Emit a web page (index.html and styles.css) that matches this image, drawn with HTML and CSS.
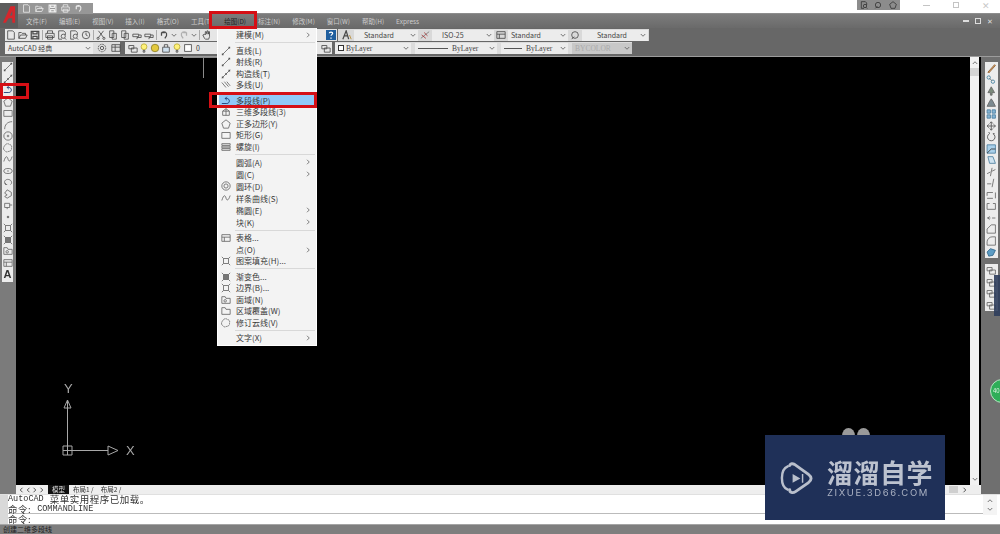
FILE: index.html
```html
<!DOCTYPE html>
<html lang="zh-CN">
<head>
  <meta charset="UTF-8" />
  <title>AutoCAD 经典</title>
  <link rel="stylesheet" href="styles.css">
</head>
<body>
<svg class="sprite" xmlns="http://www.w3.org/2000/svg">
  <symbol id="new" viewBox="0 0 12 12"><path d="M2 1h6l2 2v8H2z"/></symbol>
  <symbol id="open" viewBox="0 0 12 12"><path d="M1 10V3h3l1 1h4v2M1 10l2-4h8l-2 4z"/></symbol>
  <symbol id="save" viewBox="0 0 12 12"><path d="M1.500 1.500h9v9h-9zM3.500 1.500v3h5v-3M3.500 10.500v-3h5v3" stroke-width="1.500"/></symbol>
  <symbol id="print" viewBox="0 0 12 12"><path d="M3 4V1h6v3M1 4h10v5H1zM3 7h6v4H3z"/></symbol>
  <symbol id="preview" viewBox="0 0 12 12"><path d="M2 1h6l2 2v3M2 1v10h4"/><circle cx="7.500" cy="7.500" r="2.500"/><path d="M9 9.500l2 2"/></symbol>
  <symbol id="plot" viewBox="0 0 12 12"><circle cx="6" cy="6" r="4.500"/><path d="M6 3v3l2 1"/></symbol>
  <symbol id="cut" viewBox="0 0 12 12"><path d="M3 1l6 8M9 1l-6 8"/><circle cx="2.500" cy="10" r="1.300"/><circle cx="9.500" cy="10" r="1.300"/></symbol>
  <symbol id="copy" viewBox="0 0 12 12"><path d="M2 1h5v8H2zM5 4h5v7H5z"/></symbol>
  <symbol id="brush" viewBox="0 0 12 12"><path d="M1 5h7v3H1zM8 6h3v3H6v2"/></symbol>
  <symbol id="undo" viewBox="0 0 12 12"><path d="M3 3c4-2 7 0 6 4l-2 3M3 3v4M3 3h4" stroke-width="1.500"/></symbol>
  <symbol id="pan" viewBox="0 0 12 12"><path d="M3 10l-2-4 2-1 1 1V2l1 0 1 3V1l1 0 1 4V2l1 0v6l-1 3H4z"/></symbol>
  <symbol id="help" viewBox="0 0 12 12"><rect width="12" height="12" fill="#1f5e9e" stroke="none"/><path d="M4 4c0-2 4-2 4 0 0 1-2 2-2 3M6 9v1.500" stroke="#fff" stroke-width="1.500"/></symbol>
  <symbol id="gear" viewBox="0 0 12 12"><circle cx="6" cy="6" r="2"/><circle cx="6" cy="6" r="4.500" stroke-dasharray="2 1"/></symbol>
  <symbol id="grid" viewBox="0 0 12 12"><path d="M1 2h10v8H1zM1 5h10M5 2v8"/></symbol>
  <symbol id="layers" viewBox="0 0 12 12"><path d="M1 3h6v4H1zM4 6h7v5H4z"/></symbol>
  <symbol id="bulb" viewBox="0 0 12 12"><circle cx="6" cy="4.500" r="3.500" fill="#fff27a" stroke="#b9a93a"/><path d="M5 9h2v2H5z"/></symbol>
  <symbol id="sun" viewBox="0 0 12 12"><circle cx="6" cy="6" r="4.500" fill="#e3c93e" stroke="#8d7f25"/></symbol>
  <symbol id="lock" viewBox="0 0 12 12"><path d="M2 5h8v6H2z" fill="#cfe0ee"/><path d="M4 5V2h4v3"/></symbol>
  <symbol id="box" viewBox="0 0 12 12"><rect x="2" y="2" width="8" height="8" fill="#fff"/></symbol>
  <symbol id="textstyle" viewBox="0 0 12 12"><path d="M1 11L5 1l3 10M3 7h4" stroke-width="1.500"/><path d="M9 6l2 5" stroke="#b8892f"/></symbol>
  <symbol id="dim" viewBox="0 0 12 12"><path d="M1 10L11 2" stroke="#777"/><path d="M2 6l5 4M5 3l4 4" stroke="#a33"/></symbol>
  <symbol id="table" viewBox="0 0 12 12"><path d="M1 2h10v8H1zM1 5h10M4 5v5" /></symbol>
  <symbol id="mleader" viewBox="0 0 12 12"><circle cx="6" cy="6" r="4"/><path d="M2 11l3-3"/></symbol>
  <symbol id="line" viewBox="0 0 12 12"><path d="M2 10L10 2"/><path d="M1 9h2v2H1zM9 1h2v2H9z" fill="#555" stroke="none"/></symbol>
  <symbol id="xline" viewBox="0 0 12 12"><path d="M1 11L11 1"/><path d="M5 5h2v2H5zM1 9h2v2H1zM9 1h2v2H9z" fill="#555" stroke="none"/></symbol>
  <symbol id="mline" viewBox="0 0 12 12"><path d="M1 3l5 6M4 2l5 6M7 2l4 5"/></symbol>
  <symbol id="pline" viewBox="0 0 12 12"><path d="M1 9h6c4 0 4-6 0-6H5M5 3l2-2M5 3l2 2" stroke="#1d3f7a" stroke-width="1.100"/></symbol>
  <symbol id="pline3d" viewBox="0 0 12 12"><path d="M2 10V5l4-3 4 3v5zM2 5h8M6 2v8"/></symbol>
  <symbol id="polygon" viewBox="0 0 12 12"><path d="M6 1l5 4-2 6H3L1 5z"/></symbol>
  <symbol id="rect" viewBox="0 0 12 12"><path d="M1 3h10v7H1z"/></symbol>
  <symbol id="helix" viewBox="0 0 12 12"><path d="M1 2h10v2H1zM1 5h10v2H1zM1 8h10v2H1z"/></symbol>
  <symbol id="arc" viewBox="0 0 12 12"><path d="M2 11C2 6 5 2 11 2"/></symbol>
  <symbol id="circle" viewBox="0 0 12 12"><circle cx="6" cy="6" r="5"/><circle cx="6" cy="6" r="1"/></symbol>
  <symbol id="donut" viewBox="0 0 12 12"><circle cx="6" cy="6" r="5"/><circle cx="6" cy="6" r="2.500"/></symbol>
  <symbol id="spline" viewBox="0 0 12 12"><path d="M1 9c2-7 4-7 5-3s3 3 5-3"/></symbol>
  <symbol id="cloud" viewBox="0 0 12 12"><path d="M3 2c2-2 4-1 5 0 2 0 3 2 2 4 1 2-1 4-3 4-2 1-4 1-5-1-2-1-2-4 1-7z" stroke-dasharray="2 .6"/></symbol>
  <symbol id="ellipse" viewBox="0 0 12 12"><ellipse cx="6" cy="6" rx="5" ry="3"/><path d="M5 6h2"/></symbol>
  <symbol id="earc" viewBox="0 0 12 12"><path d="M3 9C0 6 3 2 7 3s4 5 2 6"/><path d="M5 9l-2 0v-2"/></symbol>
  <symbol id="insert" viewBox="0 0 12 12"><path d="M5 1l5 3v4l-5 3-3-2 3-2-3-2z"/></symbol>
  <symbol id="block" viewBox="0 0 12 12"><path d="M2 4h6v5H2zM8 6h3M5 9v2"/></symbol>
  <symbol id="point" viewBox="0 0 12 12"><circle cx="6" cy="6" r="1" fill="#444"/></symbol>
  <symbol id="hatch" viewBox="0 0 12 12"><path d="M3 3h6v6H3zM1 1l2 2M11 1L9 3M1 11l2-2M11 11L9 9"/></symbol>
  <symbol id="gradient" viewBox="0 0 12 12"><path d="M3 3h6v6H3z" fill="#777"/><path d="M1 1l2 2M11 1L9 3M1 11l2-2M11 11L9 9"/></symbol>
  <symbol id="region" viewBox="0 0 12 12"><path d="M1 2h4l1 2h5v6H1z" /><circle cx="5" cy="7" r="1.500"/></symbol>
  <symbol id="wipeout" viewBox="0 0 12 12"><path d="M1 2h4l1 2h5v6H1z"/></symbol>
  <symbol id="erase" viewBox="0 0 12 12"><path d="M2 11L10 2l1 1-8 9z" fill="#d9a56b" stroke="#8a5a2c"/></symbol>
  <symbol id="clone" viewBox="0 0 12 12"><circle cx="3" cy="3" r="2" stroke="#3f7f9f"/><circle cx="8" cy="8" r="2" stroke="#3f7f9f"/><path d="M4 4l3 3"/></symbol>
  <symbol id="mirror" viewBox="0 0 12 12"><path d="M6 1l4 7H7v3H5V8H2z" fill="#7b8b7b"/></symbol>
  <symbol id="offset" viewBox="0 0 12 12"><path d="M1 10l3-6 2-3 2 3 3 6z" fill="#7c8a90"/></symbol>
  <symbol id="array" viewBox="0 0 12 12"><path d="M1 1h4v4H1zM7 1h4v4H7zM1 7h4v4H1zM7 7h4v4H7z" fill="#86b6d6" stroke="#4a7d9e"/></symbol>
  <symbol id="move" viewBox="0 0 12 12"><path d="M6 1v10M1 6h10M6 1L4 3M6 1l2 2M6 11L4 9M6 11l2-2M1 6l2-2M1 6l2 2M11 6L9 4M11 6L9 8" stroke-width="1.200"/></symbol>
  <symbol id="rotate" viewBox="0 0 12 12"><path d="M4 2a4.500 4.500 0 1 0 4 0M4 2L3 0M8 2h2" stroke-width="1.200"/></symbol>
  <symbol id="scale" viewBox="0 0 12 12"><path d="M1 1h10v10H1z" fill="#a9d0ea" stroke="#4a7d9e"/><path d="M1 11l5-5h5" stroke="#333"/></symbol>
  <symbol id="stretch" viewBox="0 0 12 12"><path d="M2 2h6l3 8H4z" fill="#cfe3f0" stroke="#4a7d9e"/></symbol>
  <symbol id="trim" viewBox="0 0 12 12"><path d="M1 8l4-2M7 5l4-2M7 1L5 11"/></symbol>
  <symbol id="extend" viewBox="0 0 12 12"><path d="M1 7h5M9 1L7 11" /></symbol>
  <symbol id="brk" viewBox="0 0 12 12"><path d="M1 3h10v7H1z" stroke-dasharray="7 3"/></symbol>
  <symbol id="gap" viewBox="0 0 12 12"><path d="M1 3v7h10V3M1 3h3M8 3h3"/></symbol>
  <symbol id="join" viewBox="0 0 12 12"><path d="M1 6h4M7 6h4M4 4L2 6l2 2"/></symbol>
  <symbol id="chamfer" viewBox="0 0 12 12"><path d="M1 11V6l5-5h5v10z"/></symbol>
  <symbol id="fillet" viewBox="0 0 12 12"><path d="M1 11V7c0-3 3-6 6-6h4v10z"/></symbol>
  <symbol id="explode" viewBox="0 0 12 12"><path d="M1 6l4-4 6 2-3 6-5 1z" fill="#5c9cc4" stroke="#2e6488"/></symbol>
  <symbol id="chev" viewBox="0 0 8 6"><path d="M1 1l3 3 3-3"/></symbol>
  <symbol id="chevup" viewBox="0 0 8 6"><path d="M1 5l3-3 3 3"/></symbol>
  <symbol id="chevr" viewBox="0 0 6 8"><path d="M1 1l3 3-3 3"/></symbol>
  <symbol id="chevl" viewBox="0 0 6 8"><path d="M5 1L2 4l3 3"/></symbol>
</svg>

<div class="app">
  <header class="title">
    <div class="app-logo">
      <svg viewBox="0 0 14 20"><path d="M0 19L8 1h5v18h-3v-5H6l-3 5zM7.500 11H10V6z" fill="#d5262c"/></svg>
    </div>
    <div class="quick">
      <svg class="ic lt"><use href="#new"/></svg>
      <svg class="ic lt"><use href="#open"/></svg>
      <svg class="ic lt"><use href="#save"/></svg>
      <svg class="ic lt"><use href="#print"/></svg>
      <svg class="ic lt"><use href="#undo"/></svg>
    </div>
    <div class="spacer"></div>
    <div class="info">
      <svg class="ic"><use href="#preview"/></svg>
      <svg class="ic"><use href="#mleader"/></svg>
      <svg class="ic"><use href="#polygon"/></svg>
    </div>
    <div class="winbtns">
      <span class="wb-min"></span>
      <span class="wb-max"></span>
      <span class="wb-close">✕</span>
    </div>
  </header>

  <nav class="menubar">
    <span>文件(F)</span><span>编辑(E)</span><span>视图(V)</span><span>插入(I)</span><span>格式(O)</span><span>工具(T)</span>
    <span class="open">绘图(D)</span><span>标注(N)</span><span>修改(M)</span><span>窗口(W)</span><span>帮助(H)</span><span>Express</span>
    <div class="docbtns"><span class="db-min"></span><span class="db-max"></span><span class="db-close">✕</span></div>
  </nav>

  <div class="tb tb1">
    <div class="seg seg-std">
      <svg class="ic"><use href="#new"/></svg>
      <svg class="ic"><use href="#open"/></svg>
      <svg class="ic"><use href="#save"/></svg>
      <i class="bar"></i>
      <svg class="ic"><use href="#print"/></svg>
      <svg class="ic"><use href="#preview"/></svg>
      <svg class="ic"><use href="#preview"/></svg>
      <svg class="ic"><use href="#plot"/></svg>
      <i class="bar"></i>
      <svg class="ic"><use href="#cut"/></svg>
      <svg class="ic"><use href="#copy"/></svg>
      <svg class="ic"><use href="#copy"/></svg>
      <svg class="ic"><use href="#brush"/></svg>
      <svg class="ic"><use href="#brush"/></svg>
      <i class="bar"></i>
      <svg class="ic"><use href="#undo"/></svg>
      <svg class="chev"><use href="#chev"/></svg>
      <svg class="ic faded flip"><use href="#undo"/></svg>
      <svg class="chev"><use href="#chev"/></svg>
      <i class="bar"></i>
      <svg class="ic"><use href="#pan"/></svg>
      <div class="spacer"></div>
      <svg class="ic"><use href="#help"/></svg>
    </div>
    <div class="seg seg-styles">
      <svg class="ic"><use href="#textstyle"/></svg>
      <div class="combo w64 center">Standard<svg class="chev"><use href="#chev"/></svg></div>
      <svg class="ic"><use href="#dim"/></svg>
      <div class="combo w62 center">ISO-25<svg class="chev"><use href="#chev"/></svg></div>
      <svg class="ic"><use href="#table"/></svg>
      <div class="combo w60">Standard<svg class="chev"><use href="#chev"/></svg></div>
      <svg class="ic"><use href="#mleader"/></svg>
      <div class="combo w66 center wide">Standard<svg class="chev"><use href="#chev"/></svg></div>
    </div>
  </div>

  <div class="tb tb2">
    <div class="seg seg-ws">
      <div class="combo w88">AutoCAD 经典<svg class="chev"><use href="#chev"/></svg></div>
      <svg class="ic"><use href="#gear"/></svg>
      <svg class="ic"><use href="#grid"/></svg>
    </div>
    <div class="seg seg-layer">
      <svg class="ic"><use href="#layers"/></svg>
      <svg class="ic"><use href="#bulb"/></svg>
      <svg class="ic"><use href="#sun"/></svg>
      <svg class="ic"><use href="#lock"/></svg>
      <svg class="ic"><use href="#bulb"/></svg>
      <svg class="ic"><use href="#box"/></svg>
      <span class="layer-name">0</span>
      <div class="spacer"></div>
      <svg class="ic"><use href="#layers"/></svg>
    </div>
    <div class="seg seg-props">
      <div class="combo w76 serif"><i class="swatch"></i>ByLayer<svg class="chev"><use href="#chev"/></svg></div>
      <div class="combo w82 serif"><i class="ln"></i>ByLayer<svg class="chev"><use href="#chev"/></svg></div>
      <div class="combo w67 serif"><i class="ln short"></i>ByLayer<svg class="chev"><use href="#chev"/></svg></div>
      <div class="combo w60 serif dim">BYCOLOR<svg class="chev"><use href="#chev"/></svg></div>
    </div>
  </div>

  <div class="main">
    <aside class="side-l">
      <div class="tools">
        <svg class="ic"><use href="#line"/></svg>
        <svg class="ic"><use href="#xline"/></svg>
        <svg class="ic"><use href="#pline"/></svg>
        <svg class="ic"><use href="#polygon"/></svg>
        <svg class="ic"><use href="#rect"/></svg>
        <svg class="ic"><use href="#arc"/></svg>
        <svg class="ic"><use href="#circle"/></svg>
        <svg class="ic"><use href="#cloud"/></svg>
        <svg class="ic"><use href="#spline"/></svg>
        <svg class="ic"><use href="#ellipse"/></svg>
        <svg class="ic"><use href="#earc"/></svg>
        <svg class="ic"><use href="#insert"/></svg>
        <svg class="ic"><use href="#block"/></svg>
        <svg class="ic"><use href="#point"/></svg>
        <svg class="ic"><use href="#hatch"/></svg>
        <svg class="ic"><use href="#gradient"/></svg>
        <svg class="ic"><use href="#region"/></svg>
        <svg class="ic"><use href="#table"/></svg>
        <span class="tool-a">A</span>
      </div>
    </aside>

    <div class="work">
      <div class="work-top">
        <div class="canvas">
          <svg class="cursor" viewBox="0 0 36 22"><path d="M0 .5h36M20.500 0v21"/></svg>
          <svg class="ucs" viewBox="0 0 80 90">
            <path d="M5.500 69V23M2 31l3.500-8 3.500 8zM1 69h9v9H1zM5.500 69v9M1 73.500h9M10 73.500h36M46 69l10 4.500-10 4.500z"/>
            <text x="2" y="16">Y</text>
            <text x="64" y="78">X</text>
          </svg>
          <div class="ears"><i></i><i></i></div>
        </div>
        <div class="vscroll">
          <svg class="chev"><use href="#chevup"/></svg>
          <i class="thumb"></i>
          <div class="spacer"></div>
          <svg class="chev"><use href="#chev"/></svg>
        </div>
      </div>
      <div class="tabs">
        <svg class="nav"><use href="#chevl"/></svg>
        <svg class="nav"><use href="#chevl"/></svg>
        <svg class="nav"><use href="#chevr"/></svg>
        <svg class="nav"><use href="#chevr"/></svg>
        <span class="tab on">模型</span>
        <span class="tab">布局1</span>
        <span class="tab">布局2</span>
        <div class="spacer"></div>
        <i class="thumb"></i>
        <svg class="nav"><use href="#chevr"/></svg>
      </div>
    </div>

    <aside class="side-r">
      <div class="tools">
        <svg class="ic"><use href="#erase"/></svg>
        <svg class="ic"><use href="#clone"/></svg>
        <svg class="ic"><use href="#mirror"/></svg>
        <svg class="ic"><use href="#offset"/></svg>
        <svg class="ic"><use href="#array"/></svg>
        <svg class="ic"><use href="#move"/></svg>
        <svg class="ic"><use href="#rotate"/></svg>
        <svg class="ic"><use href="#scale"/></svg>
        <svg class="ic"><use href="#stretch"/></svg>
        <svg class="ic"><use href="#trim"/></svg>
        <svg class="ic"><use href="#extend"/></svg>
        <svg class="ic"><use href="#brk"/></svg>
        <svg class="ic"><use href="#gap"/></svg>
        <svg class="ic"><use href="#join"/></svg>
        <svg class="ic"><use href="#chamfer"/></svg>
        <svg class="ic"><use href="#fillet"/></svg>
        <svg class="ic"><use href="#explode"/></svg>
      </div>
      <div class="tools tools2">
        <svg class="ic"><use href="#layers"/></svg>
        <svg class="ic"><use href="#layers"/></svg>
        <svg class="ic"><use href="#layers"/></svg>
        <svg class="ic"><use href="#layers"/></svg>
      </div>
    </aside>
  </div>

  <section class="cmd">
    <div class="cmd-grip"></div>
    <div class="cmd-body">
      <div class="cmd-log">
        <div><span>AutoCAD</span> <span class="cjk">菜单实用程序已加载。</span></div>
        <div><span class="cjk">命令:</span> COMMANDLINE</div>
      </div>
      <div class="cmd-input"><span class="cjk">命令:</span></div>
    </div>
    <div class="cmd-scroll">
      <svg class="chev"><use href="#chevup"/></svg>
      <svg class="chev"><use href="#chev"/></svg>
    </div>
  </section>

  <footer class="status">创建二维多段线</footer>

  <!-- 展开的绘图菜单 -->
  <div class="menu">
    <div class="mi"><span>建模(M)</span><svg class="arr"><use href="#chevr"/></svg></div>
    <i class="sep"></i>
    <div class="mi"><svg class="ic"><use href="#line"/></svg><span>直线(L)</span></div>
    <div class="mi"><svg class="ic"><use href="#line"/></svg><span>射线(R)</span></div>
    <div class="mi"><svg class="ic"><use href="#xline"/></svg><span>构造线(T)</span></div>
    <div class="mi"><svg class="ic"><use href="#mline"/></svg><span>多线(U)</span></div>
    <i class="sep"></i>
    <div class="mi hot"><svg class="ic"><use href="#pline"/></svg><span>多段线(P)</span></div>
    <div class="mi"><svg class="ic"><use href="#pline3d"/></svg><span>三维多段线(3)</span></div>
    <div class="mi"><svg class="ic"><use href="#polygon"/></svg><span>正多边形(Y)</span></div>
    <div class="mi"><svg class="ic"><use href="#rect"/></svg><span>矩形(G)</span></div>
    <div class="mi"><svg class="ic"><use href="#helix"/></svg><span>螺旋(I)</span></div>
    <i class="sep"></i>
    <div class="mi tall"><span>圆弧(A)</span><svg class="arr"><use href="#chevr"/></svg></div>
    <div class="mi tall"><span>圆(C)</span><svg class="arr"><use href="#chevr"/></svg></div>
    <div class="mi tall"><svg class="ic"><use href="#donut"/></svg><span>圆环(D)</span></div>
    <div class="mi tall"><svg class="ic"><use href="#spline"/></svg><span>样条曲线(S)</span></div>
    <div class="mi tall"><span>椭圆(E)</span><svg class="arr"><use href="#chevr"/></svg></div>
    <div class="mi tall"><span>块(K)</span><svg class="arr"><use href="#chevr"/></svg></div>
    <i class="sep"></i>
    <div class="mi"><svg class="ic"><use href="#table"/></svg><span>表格...</span></div>
    <div class="mi"><span>点(O)</span><svg class="arr"><use href="#chevr"/></svg></div>
    <div class="mi"><svg class="ic"><use href="#hatch"/></svg><span>图案填充(H)...</span></div>
    <i class="sep"></i>
    <div class="mi"><svg class="ic"><use href="#gradient"/></svg><span>渐变色...</span></div>
    <div class="mi"><svg class="ic"><use href="#hatch"/></svg><span>边界(B)...</span></div>
    <div class="mi"><svg class="ic"><use href="#region"/></svg><span>面域(N)</span></div>
    <div class="mi"><svg class="ic"><use href="#wipeout"/></svg><span>区域覆盖(W)</span></div>
    <div class="mi"><svg class="ic"><use href="#cloud"/></svg><span>修订云线(V)</span></div>
    <i class="sep"></i>
    <div class="mi"><span>文字(X)</span><svg class="arr"><use href="#chevr"/></svg></div>
  </div>

  <!-- 教程标注 -->
  <i class="mark mark-menu"></i>
  <i class="mark mark-item"></i>
  <i class="mark mark-tool"></i>

  <div class="navy-strip"></div>
  <div class="green-ball">40</div>

  <div class="watermark">
    <svg class="wm-logo" viewBox="0 0 36 36">
      <path d="M9 6C4 8 3 12 3 18s1 10 6 12" fill="none" stroke="#b9bfcc" stroke-width="2.500" stroke-linecap="round"/>
      <path d="M11 5c1-2 3-2 5-1l14 10c4 3 4 6 0 9L17 32c-3 2-6 1-6-2" fill="none" stroke="#b9bfcc" stroke-width="3" stroke-linecap="round"/>
      <path d="M14 14l8 4.500-8 4.500zM23.500 14h1.500v9h-1.500z" fill="#b9bfcc"/>
    </svg>
    <div class="wm-text">
      <div class="wm-cn">溜溜自学</div>
      <div class="wm-en">ZIXUE.3D66.COM</div>
    </div>
  </div>
</div>
</body>
</html>
```

FILE: styles.css
```css
* { box-sizing: border-box; }
html, body {
  margin: 0;
  width: 1000px;
  height: 534px;
  overflow: hidden;
}
body {
  font-family: "Noto Sans CJK SC", "Noto Sans", sans-serif;
  background: #6c6c6c;
}
.sprite { display: none; }
.spacer { flex: 1; }

.app {
  position: relative;
  width: 1000px;
  height: 534px;
  display: flex;
  flex-direction: column;
  overflow: hidden;
  filter: blur(0.35px);
}

.ic {
  width: 10px;
  height: 10px;
  flex: none;
  fill: none;
  stroke: #4a4a4a;
  stroke-width: 1;
}
.ic.lt { stroke: #eee; }
.ic.faded { opacity: 0.35; }
.ic.flip { transform: scaleX(-1); }
.chev {
  width: 6px;
  height: 5px;
  flex: none;
  fill: none;
  stroke: #666;
  stroke-width: 1.2;
}

/* title */
.title {
  height: 14px;
  flex: none;
  display: flex;
  background: #fff;
  border-bottom: 1px solid #8d8d8d;
}
.app-logo {
  width: 18px;
  height: 25px;
  margin-top: 3px;
  padding: 2px 2px 0 3px;
  background: #5d5d5d;
  position: relative;
  z-index: 2;
}
.app-logo svg { display: block; width: 13px; height: 19px; }
.quick {
  width: 75px;
  height: 11px;
  margin-top: 3px;
  padding-left: 4px;
  display: flex;
  align-items: center;
  gap: 4px;
  background: #979797;
}
.quick .ic { width: 9px; height: 9px; }
.info {
  width: 43px;
  height: 10px;
  margin-right: 20px;
  display: flex;
  justify-content: space-around;
  align-items: center;
  background: #8c8c8c;
}
.info .ic { width: 8px; height: 8px; stroke: #222; }
.winbtns {
  width: 80px;
  display: flex;
  align-items: center;
  justify-content: space-between;
  padding: 0 10px 3px 3px;
  color: #c8c8c8;
  font-size: 9px;
}
.wb-min { width: 7px; height: 1px; background: #c4c4c4; }
.wb-max { width: 6px; height: 6px; border: 1px solid #c4c4c4; }

/* menu bar */
.menubar {
  height: 14px;
  flex: none;
  display: flex;
  align-items: center;
  gap: 12px;
  padding-left: 26px;
  background: linear-gradient(#7c7c7c, #6a6a6a);
  color: #cdcdcd;
  font-size: 6.500px;
  white-space: nowrap;
}
.menubar .open { color: #222; }
.docbtns {
  margin-left: auto;
  width: 40px;
  display: flex;
  align-items: center;
  gap: 6px;
  padding-left: 3px;
  color: #ddd;
  font-size: 7px;
}
.db-min { width: 6px; height: 1.500px; background: #ddd; }
.db-max { width: 6px; height: 6px; border: 1.500px solid #ddd; }

/* toolbars */
.tb {
  height: 14px;
  flex: none;
  display: flex;
  align-items: center;
  background: #676767;
  color: #444;
  font-size: 7px;
}
.seg {
  height: 12px;
  display: flex;
  align-items: center;
  background: #e6e6e6;
}
.bar { width: 1px; height: 10px; background: #aaa; flex: none; }
.seg-std {
  width: 332px;
  margin-left: 5px;
  padding: 0 1px;
  gap: 2px;
}
.seg-styles {
  width: 311px;
  margin-left: 1px;
  padding: 0 0 0 4px;
  gap: 2px;
  background: #d9d9d9;
}
.combo {
  height: 11px;
  display: flex;
  align-items: center;
  padding: 0 2px 0 3px;
  background: #ececec;
  white-space: nowrap;
  flex: none;
}
.combo .chev { margin-left: auto; }
.combo.center { padding-left: 10px; }
.combo.wide { padding-left: 15px; }
.w60 { width: 60px; }
.w62 { width: 62px; }
.w64 { width: 64px; }
.w66 { width: 66px; }
.w67 { width: 67px; }
.w76 { width: 76px; }
.w82 { width: 82px; }
.w88 { width: 88px; }

.tb2 { height: 15px; padding-bottom: 2px; border-bottom: 1px solid #9c9c9c; }
.seg-ws {
  width: 115px;
  margin-left: 5px;
  gap: 4px;
  background: #dedede;
}
.seg-layer {
  width: 207px;
  margin-left: 5px;
  padding: 0 1px 0 3px;
  gap: 1px;
}
.layer-name { margin-left: 2px; font-size: 7px; color: #333; }
.seg-props {
  width: 297px;
  margin-left: 3px;
  gap: 4px;
  background: #dcdcdc;
}
.serif { font-family: "Liberation Serif", serif; font-size: 7.500px; }
.dim { color: #aaa; background: #c8c8c8; }
.swatch { width: 6px; height: 6px; border: 1px solid #333; background: #fff; margin-right: 2px; }
.ln { width: 30px; height: 1px; background: #555; margin-right: 4px; }
.ln.short { width: 18px; }

/* work area */
.main {
  flex: 1;
  min-height: 0;
  display: grid;
  grid-template-columns: 16px 1fr 19px;
}
.side-l { background: #7b7b7b; padding: 5px 3px 0 2px; }
.tools {
  display: flex;
  flex-direction: column;
  align-items: center;
  background: #ececec;
}
.side-l .tools { gap: 1.500px; padding: 0 0 2px; }
.side-l .ic { width: 10px; height: 10px; stroke: #666; }
.tool-a {
  font: 700 11px/11px "Liberation Sans", sans-serif;
  color: #333;
}
.side-r {
  background: #6f6f6f;
  padding: 5px 2px 0 4px;
}
.side-r .tools { gap: 1.500px; padding: 1px 0; }
.side-r .ic { width: 10.500px; height: 10px; stroke: #666; }
.tools2 { margin-top: 6px; }
.work { display: flex; flex-direction: column; min-width: 0; }
.work-top { flex: 1; min-height: 0; display: flex; }
.canvas { flex: 1; position: relative; background: #000; }
.cursor {
  position: absolute;
  left: 167px;
  top: 0;
  width: 36px;
  height: 22px;
  fill: none;
  stroke: #8a8a8a;
  stroke-width: 1;
}
.ucs {
  position: absolute;
  left: 46px;
  top: 320px;
  width: 80px;
  height: 90px;
  fill: none;
  stroke: #a8a8a8;
  stroke-width: 1;
}
.ucs text {
  fill: #a8a8a8;
  stroke: none;
  font: 13px "Liberation Sans", sans-serif;
}
.ears {
  position: absolute;
  left: 826px;
  top: 371px;
  display: flex;
  gap: 2px;
}
.ears i { width: 13px; height: 16px; border-radius: 50%; background: #9a9a9a; }
.vscroll {
  width: 9px;
  margin-right: 2px;
  display: flex;
  flex-direction: column;
  align-items: center;
  padding: 3px 0;
  background: #f1f1f1;
  box-shadow: 2px 0 0 #000;
}
.vscroll .thumb { width: 9px; height: 8px; margin-top: 3px; background: #d4d4d4; }
.tabs {
  height: 9px;
  flex: none;
  display: flex;
  align-items: center;
  padding: 0 12px 0 2px;
  background: #eee;
  font-size: 6.500px;
  color: #333;
}
.nav { width: 6px; height: 6px; margin-right: 1px; flex: none; fill: none; stroke: #444; stroke-width: 1.200; }
.tab { padding: 0 3px 0 4px; line-height: 9px; }
.tab::after { content: " /"; }
.tab.on { margin-left: 2px; padding: 0 4px; background: #111; color: #ddd; }
.tab.on::after { content: ""; }
.tabs .thumb { width: 9px; height: 7px; margin-right: 4px; background: #cfcfcf; }

/* command line */
.cmd {
  height: 30px;
  flex: none;
  display: flex;
  background: #fff;
  border-top: 1px solid #e0e0e0;
  font: 8.500px/9px "Liberation Mono", monospace;
  color: #333;
}
.cmd-grip { width: 8px; background: #d9d9d9; }
.cmd-body { flex: 1; display: flex; flex-direction: column; }
.cjk { font-family: "Noto Sans CJK SC", sans-serif; font-size: 9.500px; letter-spacing: 0.500px; line-height: 9px; }
.cmd-log { height: 19px; border-bottom: 1px solid #bbb; white-space: nowrap; }
.cmd-log div { height: 9.500px; display: flex; align-items: center; gap: 6px; }
.cmd-input { height: 10px; display: flex; align-items: center; }
.cmd-scroll {
  width: 14px;
  height: 20px;
  margin-right: 3px;
  display: flex;
  flex-direction: column;
  align-items: center;
  justify-content: space-between;
  padding: 3px 0;
  background: #f4f4f4;
}
.status {
  height: 10px;
  flex: none;
  background: #7e7e7e;
  border-top: 1px solid #a5a5a5;
  padding-left: 3px;
  font-size: 7px;
  line-height: 9px;
  color: #1d1d1d;
}

/* draw menu */
.menu {
  position: absolute;
  left: 217px;
  top: 28px;
  width: 100px;
  height: 318px;
  padding: 1px 1px 2px;
  background: #f3f3f3;
  border: 1px solid #fff;
  border-top: 0;
  font-size: 8px;
  color: #3a3a3a;
  z-index: 3;
}
.mi {
  position: relative;
  height: 11.500px;
  display: flex;
  align-items: center;
  padding-left: 17px;
  white-space: nowrap;
}
.mi.tall { height: 12px; }
.mi .ic { position: absolute; left: 2px; top: 1px; width: 10px; height: 10px; stroke: #666; }
.mi.hot { background: #91c9f7; }
.mi .arr {
  position: absolute;
  right: 4px;
  top: 3px;
  width: 5px;
  height: 6px;
  fill: none;
  stroke: #555;
}
.sep { display: block; height: 4px; padding: 1.500px 0 1.500px 16px; background-clip: content-box; background-color: #d8d8d8; }

/* red tutorial boxes */
.mark {
  position: absolute;
  border: 3px solid #d50f15;
  z-index: 4;
}
.mark-menu { left: 209px; top: 11px; width: 48px; height: 18px; }
.mark-item { left: 209px; top: 92px; width: 108px; height: 16px; }
.mark-tool { left: 0; top: 83px; width: 29px; height: 16px; }

.navy-strip {
  position: absolute;
  left: 994px;
  top: 275px;
  width: 6px;
  height: 41px;
  background: #2d3d5c;
  opacity: 0.9;
  z-index: 2;
}
.green-ball {
  position: absolute;
  left: 990px;
  top: 379px;
  width: 24px;
  height: 24px;
  border-radius: 50%;
  border: 1px solid #b9e6c4;
  background: #2fae58;
  color: #dff5e4;
  font-size: 6px;
  line-height: 22px;
  padding-left: 2px;
  z-index: 2;
}

.watermark {
  position: absolute;
  left: 765px;
  top: 435px;
  width: 180px;
  height: 85px;
  display: flex;
  align-items: center;
  gap: 13px;
  padding: 0 0 0 14px;
  background: #1f3058;
  z-index: 5;
}
.wm-logo { width: 35px; height: 38px; flex: none; }
.wm-text { color: #bcc2cf; white-space: nowrap; }
.wm-cn { font-size: 26px; line-height: 30px; font-weight: 700; letter-spacing: 0.500px; }
.wm-en {
  font: 9.500px/11px "Inter", sans-serif;
  letter-spacing: 1.600px;
  color: #aab1c2;
}
```
